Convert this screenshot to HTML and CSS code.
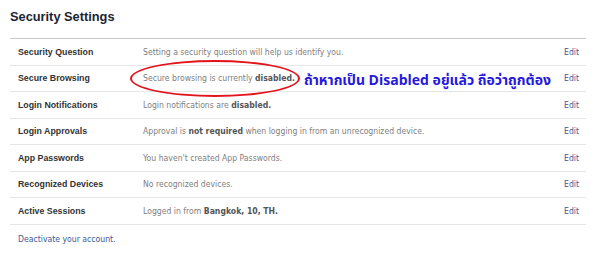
FILE: index.html
```html
<!DOCTYPE html>
<html lang="en">
  <head>
    <meta charset="UTF-8" />
    <title>Security Settings</title>
    <link rel="stylesheet" href="styles.css">
  </head>
  <body>
    <div class="settings">
      <h1>Security Settings</h1>

      <ul class="setting-list">
        <li class="setting-item">
          <span class="setting-label">Security Question</span>
          <span class="setting-desc">Setting a security question will help us identify you.</span>
          <a class="setting-edit" href="#">Edit</a>
        </li>
        <li class="setting-item">
          <span class="setting-label">Secure Browsing</span>
          <span class="setting-desc">Secure browsing is currently <b>disabled.</b></span>
          <a class="setting-edit" href="#">Edit</a>
          <span class="mark-ring"></span>
          <span class="mark-note" lang="th">ถ้าหากเป็น Disabled อยู่แล้ว ถือว่าถูกต้อง</span>
        </li>
        <li class="setting-item">
          <span class="setting-label">Login Notifications</span>
          <span class="setting-desc">Login notifications are <b>disabled.</b></span>
          <a class="setting-edit" href="#">Edit</a>
        </li>
        <li class="setting-item">
          <span class="setting-label">Login Approvals</span>
          <span class="setting-desc">Approval is <b>not required</b> when logging in from an unrecognized device.</span>
          <a class="setting-edit" href="#">Edit</a>
        </li>
        <li class="setting-item">
          <span class="setting-label">App Passwords</span>
          <span class="setting-desc">You haven't created App Passwords.</span>
          <a class="setting-edit" href="#">Edit</a>
        </li>
        <li class="setting-item">
          <span class="setting-label">Recognized Devices</span>
          <span class="setting-desc">No recognized devices.</span>
          <a class="setting-edit" href="#">Edit</a>
        </li>
        <li class="setting-item">
          <span class="setting-label">Active Sessions</span>
          <span class="setting-desc">Logged in from <b>Bangkok, 10, TH.</b></span>
          <a class="setting-edit" href="#">Edit</a>
        </li>
      </ul>

      <a class="deactivate" href="#">Deactivate your account.</a>
    </div>
  </body>
</html>
```

FILE: styles.css
```css
body {
  margin: 0;
  background: #ffffff;
  font-family: 'DejaVu Sans Condensed', 'Liberation Sans', sans-serif;
  font-size: 8.6px;
  color: #333333;
}

.settings {
  width: 576px;
  padding: 10px 0 0 10px;
}

h1 {
  margin: 0;
  height: 28px;
  font-family: 'Liberation Sans', sans-serif;
  font-size: 12.8px;
  font-weight: bold;
  color: #1c2433;
  line-height: 14px;
}

.setting-list {
  list-style: none;
  margin: 0;
  padding: 0;
  border-top: 1px solid #c8c8c8;
}

.setting-item {
  position: relative;
  display: flex;
  align-items: center;
  height: 25.5px;
  padding: 0 7px 0 8px;
  border-bottom: 1px solid #e6e6e6;
}

.setting-label {
  width: 125px;
  font-family: 'Liberation Sans', sans-serif;
  font-size: 8.8px;
  font-weight: bold;
  color: #333333;
}

.setting-desc {
  flex: 1;
  color: #808080;
}

.setting-desc b {
  color: #555555;
}

.setting-edit {
  color: #3b5998;
  text-decoration: none;
}

.mark-ring {
  position: absolute;
  left: 120px;
  top: -6px;
  width: 166px;
  height: 33px;
  border: 2px solid #e3131b;
  border-radius: 50%;
}

.mark-note {
  position: absolute;
  left: 294px;
  top: 4px;
  font-family: 'Noto Sans Thai', 'Noto Sans', sans-serif;
  font-size: 14px;
  font-weight: bold;
  color: #2418e0;
  white-space: nowrap;
}

.deactivate {
  display: block;
  margin: 9px 0 0 8px;
  color: #3b5998;
  text-decoration: none;
}
```
